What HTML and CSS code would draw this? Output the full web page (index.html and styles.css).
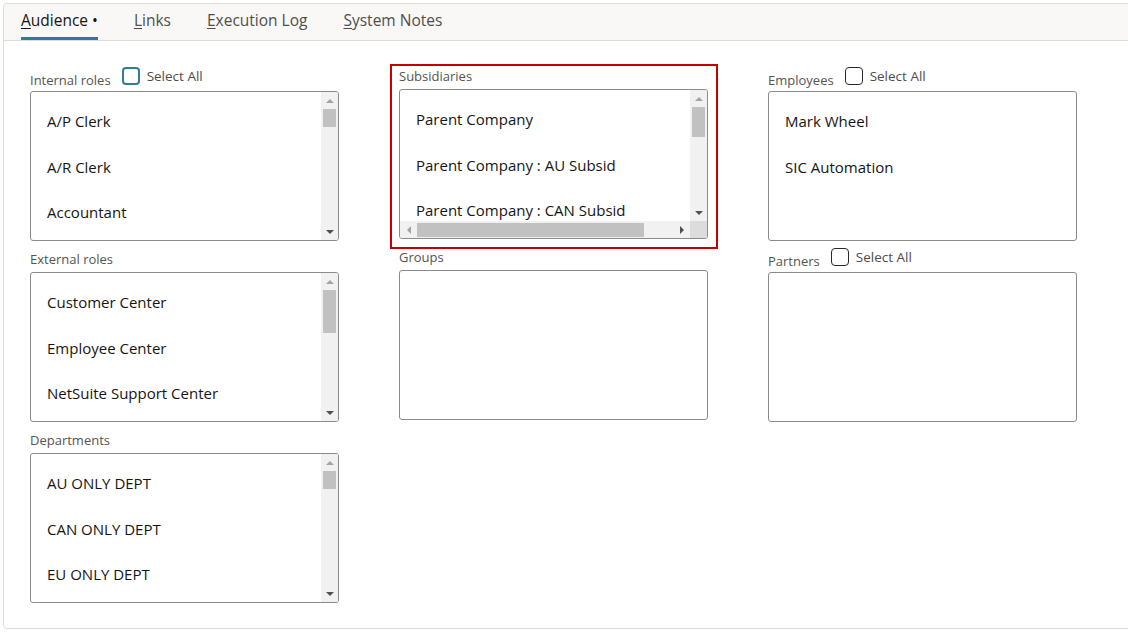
FILE: index.html
```html
<!DOCTYPE html>
<html lang="en">
<head>
<meta charset="utf-8">
<title>Audience</title>
<link rel="stylesheet" href="styles.css">
</head>
<body>
<div class="panel">
  <div class="tabs">
    <span class="tab active"><u>A</u>udience •</span>
    <span class="tab"><u>L</u>inks</span>
    <span class="tab"><u>E</u>xecution Log</span>
    <span class="tab"><u>S</u>ystem Notes</span>
  </div>
  <div class="content">
    <div class="col">
      <div class="field">
        <div class="head head-check">
          <span class="label">Internal roles</span>
          <span class="select-all"><span class="checkbox focused"></span>Select All</span>
        </div>
        <div class="listbox">
          <ul class="items">
            <li>A/P Clerk</li>
            <li>A/R Clerk</li>
            <li>Accountant</li>
          </ul>
          <div class="vscroll">
            <div class="sbtn"><span class="arr up off"></span></div>
            <div class="track"><div class="thumb"></div></div>
            <div class="sbtn"><span class="arr down"></span></div>
          </div>
        </div>
      </div>
      <div class="field">
        <div class="head"><span class="label">External roles</span></div>
        <div class="listbox">
          <ul class="items">
            <li>Customer Center</li>
            <li>Employee Center</li>
            <li>NetSuite Support Center</li>
          </ul>
          <div class="vscroll">
            <div class="sbtn"><span class="arr up off"></span></div>
            <div class="track"><div class="thumb tall"></div></div>
            <div class="sbtn"><span class="arr down"></span></div>
          </div>
        </div>
      </div>
      <div class="field">
        <div class="head"><span class="label">Departments</span></div>
        <div class="listbox">
          <ul class="items">
            <li>AU ONLY DEPT</li>
            <li>CAN ONLY DEPT</li>
            <li>EU ONLY DEPT</li>
          </ul>
          <div class="vscroll">
            <div class="sbtn"><span class="arr up off"></span></div>
            <div class="track"><div class="thumb"></div></div>
            <div class="sbtn"><span class="arr down"></span></div>
          </div>
        </div>
      </div>
    </div>

    <div class="col">
      <div class="field highlight">
        <div class="head head-plain"><span class="label">Subsidiaries</span></div>
        <div class="listbox listbox-grid">
          <ul class="items nowrap">
            <li>Parent Company</li>
            <li>Parent Company : AU Subsid</li>
            <li>Parent Company : CAN Subsid</li>
          </ul>
          <div class="vscroll">
            <div class="sbtn"><span class="arr up off"></span></div>
            <div class="track"><div class="thumb mid"></div></div>
            <div class="sbtn"><span class="arr down"></span></div>
          </div>
          <div class="hscroll">
            <div class="sbtn"><span class="arr left off"></span></div>
            <div class="htrack"><div class="hthumb"></div></div>
            <div class="sbtn"><span class="arr right"></span></div>
          </div>
          <div class="corner"></div>
        </div>
      </div>
      <div class="field groups">
        <div class="head head-plain"><span class="label">Groups</span></div>
        <div class="listbox"></div>
      </div>
    </div>

    <div class="col">
      <div class="field">
        <div class="head head-check">
          <span class="label">Employees</span>
          <span class="select-all"><span class="checkbox"></span>Select All</span>
        </div>
        <div class="listbox">
          <ul class="items">
            <li>Mark Wheel</li>
            <li>SIC Automation</li>
          </ul>
        </div>
      </div>
      <div class="field">
        <div class="head head-check">
          <span class="label">Partners</span>
          <span class="select-all"><span class="checkbox"></span>Select All</span>
        </div>
        <div class="listbox"></div>
      </div>
    </div>
  </div>
</div>
</body>
</html>
```

FILE: styles.css
```css
html, body {
  margin: 0;
  padding: 0;
  overflow: hidden;
  background: #ffffff;
}

body {
  font-family: "Open Sans", "Noto Sans", sans-serif;
  color: #161513;
}

.panel {
  box-sizing: border-box;
  margin: 3px 0 0 3px;
  width: 1140px;
  height: 626px;
  border: 1px solid #dedcd9;
  border-radius: 4px;
  background: #ffffff;
}

.tabs {
  display: flex;
  gap: 36px;
  height: 36px;
  padding-left: 17px;
  background: #f9f8f6;
  border-bottom: 1px solid #dedcd9;
  border-radius: 4px 0 0 0;
}

.tab {
  box-sizing: border-box;
  height: 36px;
  padding-top: 6px;
  font-size: 15.5px;
  line-height: 20px;
  color: #504e4b;
  border-bottom: 3px solid transparent;
  white-space: nowrap;
}

.tab.active {
  color: #161513;
  border-bottom-color: #2a7d98;
}

.tab u {
  text-decoration-thickness: 1px;
  text-underline-offset: 2px;
}

.content {
  display: grid;
  grid-template-columns: 309px 309px 309px;
  column-gap: 60px;
  padding: 23px 0 0 26px;
  align-items: start;
}

.col {
  display: flex;
  flex-direction: column;
}

.head {
  box-sizing: border-box;
  display: flex;
  align-items: flex-end;
  height: 31px;
  padding-bottom: 4px;
}

.field:first-child .head {
  height: 27px;
}

.head-check {
  padding-bottom: 2px;
}

.head-check .label {
  margin-right: 11px;
}

.label {
  font-size: 13px;
  line-height: 18px;
  color: #56544f;
  white-space: nowrap;
}

.select-all {
  display: flex;
  align-items: center;
  gap: 7px;
  height: 18px;
  margin-bottom: 4px;
  font-size: 13.5px;
  line-height: 18px;
  color: #4f4d4a;
  white-space: nowrap;
}

.checkbox {
  box-sizing: border-box;
  width: 18px;
  height: 18px;
  border: 1px solid #2a2826;
  border-radius: 4px;
  background: #ffffff;
}

.checkbox.focused {
  border: 2px solid #2e7e98;
}

.listbox {
  box-sizing: border-box;
  display: flex;
  height: 150px;
  border: 1px solid #8d8b88;
  border-radius: 3px;
  background: #ffffff;
  overflow: hidden;
}

.items {
  flex: 1;
  margin: 0;
  padding: 7px 0 0 0;
  list-style: none;
  overflow: hidden;
}

.items li {
  height: 45.5px;
  line-height: 45.5px;
  padding-left: 16px;
  font-size: 15px;
  color: #161513;
  white-space: nowrap;
}

.vscroll {
  display: flex;
  flex-direction: column;
  width: 17px;
  background: #f1f1f1;
}

.sbtn {
  display: flex;
  align-items: center;
  justify-content: center;
  width: 17px;
  height: 17px;
  flex: none;
}

.track {
  flex: 1;
}

.thumb {
  height: 18px;
  margin: 0 2px;
  background: #c1c1c1;
}

.thumb.tall {
  height: 43px;
}

.thumb.mid {
  height: 30px;
}

.arr {
  width: 0;
  height: 0;
  border: 4px solid transparent;
}

.arr.up {
  border-top-width: 0;
  border-bottom: 4px solid #505050;
}

.arr.down {
  border-bottom-width: 0;
  border-top: 4px solid #505050;
}

.arr.left {
  border-left-width: 0;
  border-right: 4px solid #505050;
}

.arr.right {
  border-right-width: 0;
  border-left: 4px solid #505050;
}

.arr.up.off {
  border-bottom-color: #a3a3a3;
}

.arr.left.off {
  border-right-color: #a3a3a3;
}

/* Subsidiaries: list with both scrollbars */
.listbox-grid {
  display: grid;
  grid-template-columns: 1fr 17px;
  grid-template-rows: 1fr 17px;
}

.listbox-grid .items {
  min-width: 0;
}

.hscroll {
  display: flex;
  height: 17px;
  background: #f1f1f1;
}

.htrack {
  flex: 1;
  display: flex;
  align-items: center;
}

.hthumb {
  width: 227px;
  height: 14px;
  background: #c1c1c1;
}

.corner {
  background: #dcdcdc;
}

.field.highlight {
  margin: 0 -10px 0 -9px;
  padding: 1px 8px 8px 7px;
  border: 2px solid #c40000;
}

.field .head.head-plain {
  height: 22px;
  padding-bottom: 4px;
}

.field.groups {
  margin-top: -1px;
}
```
